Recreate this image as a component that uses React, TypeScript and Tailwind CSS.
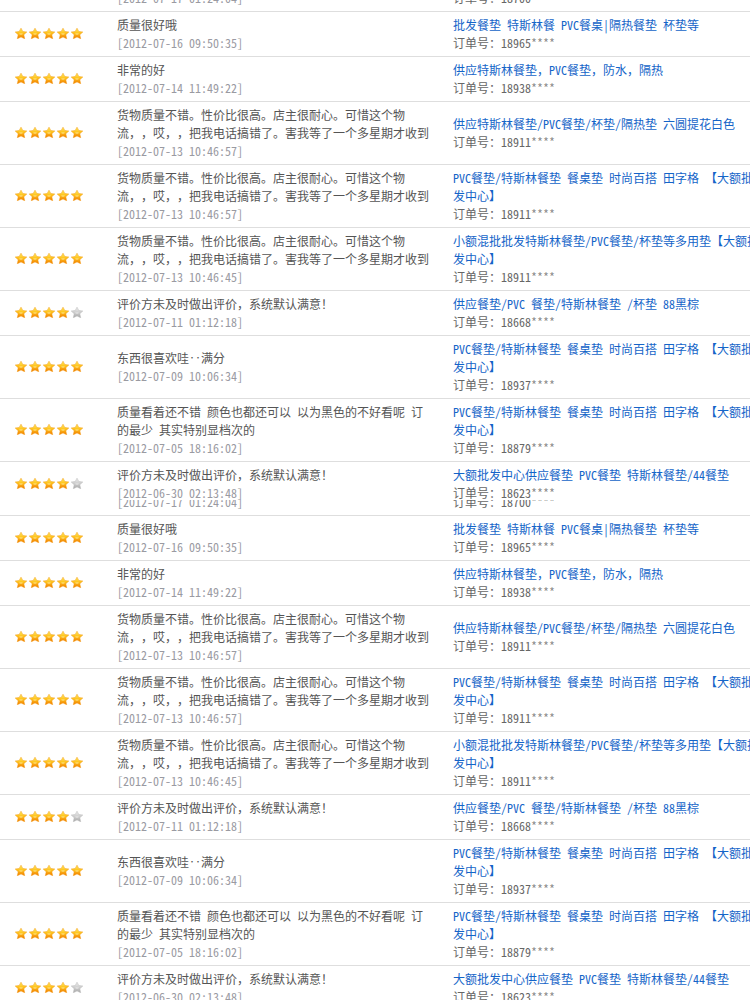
interface Review {
  stars: number;
  comment: string;
  date: string;
  title: string;
  order: string;
}

const longComment =
  "货物质量不错。性价比很高。店主很耐心。可惜这个物流，，哎，，把我电话搞错了。害我等了一个多星期才收到";
const bigTitle = "PVC餐垫/特斯林餐垫 餐桌垫 时尚百搭 田字格 【大额批发中心】";
const autoComment = "评价方未及时做出评价，系统默认满意！";

const reviews: Review[] = [
  { stars: 5, comment: "好评", date: "2012-07-17 01:24:04", title: "供应特斯林餐垫", order: "18700" },
  { stars: 5, comment: "质量很好哦", date: "2012-07-16 09:50:35", title: "批发餐垫 特斯林餐 PVC餐桌|隔热餐垫 杯垫等", order: "18965" },
  { stars: 5, comment: "非常的好", date: "2012-07-14 11:49:22", title: "供应特斯林餐垫，PVC餐垫，防水，隔热", order: "18938" },
  { stars: 5, comment: longComment, date: "2012-07-13 10:46:57", title: "供应特斯林餐垫/PVC餐垫/杯垫/隔热垫 六圆提花白色", order: "18911" },
  { stars: 5, comment: longComment, date: "2012-07-13 10:46:57", title: bigTitle, order: "18911" },
  { stars: 5, comment: longComment, date: "2012-07-13 10:46:45", title: "小额混批批发特斯林餐垫/PVC餐垫/杯垫等多用垫【大额批发中心】", order: "18911" },
  { stars: 4, comment: autoComment, date: "2012-07-11 01:12:18", title: "供应餐垫/PVC 餐垫/特斯林餐垫 /杯垫 88黑棕", order: "18668" },
  { stars: 5, comment: "东西很喜欢哇‥满分", date: "2012-07-09 10:06:34", title: bigTitle, order: "18937" },
  { stars: 5, comment: "质量看着还不错 颜色也都还可以 以为黑色的不好看呢 订的最少 其实特别显档次的", date: "2012-07-05 18:16:02", title: bigTitle, order: "18879" },
  { stars: 4, comment: autoComment, date: "2012-06-30 02:13:48", title: "大额批发中心供应餐垫 PVC餐垫 特斯林餐垫/44餐垫", order: "18623" },
];

function Star({ on }: { on: boolean }) {
  const id = on ? "starOn" : "starOff";
  return (
    <svg width="12" height="11" viewBox="0 0 12 11" className="block">
      <defs>
        <linearGradient id={id} x1="0" y1="0" x2="0" y2="1">
          <stop offset="0" stopColor={on ? "#fff06a" : "#f2f2f2"} />
          <stop offset="0.45" stopColor={on ? "#ffc41c" : "#d0d0d0"} />
          <stop offset="1" stopColor={on ? "#f07800" : "#a9a9a9"} />
        </linearGradient>
      </defs>
      <path
        d="M6 0.2 L7.8 3.5 L11.8 4 L8.8 6.8 L9.7 10.8 L6 8.9 L2.3 10.8 L3.2 6.8 L0.2 4 L4.2 3.5 Z"
        fill={`url(#${id})`}
        stroke={on ? "#f39a12" : "#b8b8b8"}
        strokeWidth="0.5"
        strokeLinejoin="round"
      />
      <path d="M4.2 5.4 L7.8 5.4 L7.2 6.6 L4.8 6.6 Z" fill={on ? "#fff7b8" : "#f4f4f4"} opacity="0.8" />
    </svg>
  );
}

function Row({ r }: { r: Review }) {
  return (
    <div className="flex items-center border-b border-[#dedede]">
      <div className="w-[100px] shrink-0 pl-[15px] flex gap-[2px] -mt-[2px]">
        {[0, 1, 2, 3, 4].map((i) => (
          <Star key={i} on={i < r.stars} />
        ))}
      </div>
      <div className="w-[353px] shrink-0 pl-[17px] pr-[21px] py-[4px]">
        <p className="text-[#555]">{r.comment}</p>
        <p className="text-[#9a9aa2]">[{r.date}]</p>
      </div>
      <div className="w-[328px] shrink-0 pr-[20px] py-[4px]">
        <a href="#" className="text-[#1464c8]">
          {r.title}
        </a>
        <p className="text-[#666]">
          订单号：{r.order}
          <span className="text-[#888]">****</span>
        </p>
      </div>
    </div>
  );
}

function Copy() {
  return (
    <div className="h-[504px] overflow-hidden">
      <div className="-mt-[29px]">
        {reviews.map((r, i) => (
          <Row key={i} r={r} />
        ))}
      </div>
    </div>
  );
}

export default function App() {
  return (
    <div className="w-[750px] h-[1000px] overflow-hidden bg-white text-[12px] leading-[18px] [text-spacing-trim:space-all] font-[family-name:'Noto_Sans_Mono_CJK_SC','Noto_Sans_CJK_SC',sans-serif]">
      <div className="-mt-[4px] w-[781px]">
        <Copy />
        <Copy />
      </div>
    </div>
  );
}
